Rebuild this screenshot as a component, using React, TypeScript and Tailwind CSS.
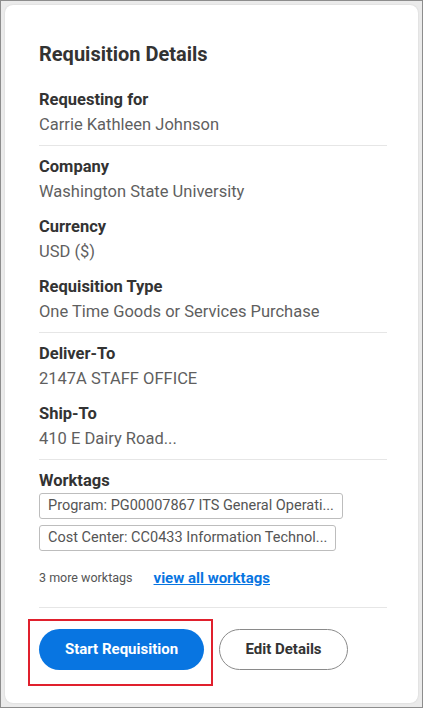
import React from "react";

type Field = { label: string; value: string };

const groups: Field[][] = [
  [{ label: "Requesting for", value: "Carrie Kathleen Johnson" }],
  [
    { label: "Company", value: "Washington State University" },
    { label: "Currency", value: "USD ($)" },
    { label: "Requisition Type", value: "One Time Goods or Services Purchase" },
  ],
  [
    { label: "Deliver-To", value: "2147A STAFF OFFICE" },
    { label: "Ship-To", value: "410 E Dairy Road..." },
  ],
];

const worktags = [
  "Program: PG00007867 ITS General Operati...",
  "Cost Center: CC0433 Information Technol...",
];

function Divider() {
  return <div className="my-[8px] h-px w-full bg-[#e6e6e6]" />;
}

export default function App() {
  return (
    <div
      className="h-[708px] w-[423px] border border-[#8d8d8d] bg-[#ebebeb] p-[4px]"
      style={{ fontFamily: "Roboto, 'Liberation Sans', sans-serif" }}
    >
      <div className="flex h-full flex-col rounded-[8px] bg-white pl-[34px] pr-[31px] pt-[37px] shadow-[0_0_2px_rgba(0,0,0,0.12)]">
        <h1 className="text-[20px] font-bold leading-[24px] text-[#333333]">
          Requisition Details
        </h1>

        <div className="mt-[21px]">
          {groups.map((group, gi) => (
            <div key={gi}>
              {gi > 0 && <Divider />}
              <div className="flex flex-col gap-[10px]">
                {group.map((f) => (
                  <div key={f.label}>
                    <div className="text-[16.5px] font-bold leading-[25px] text-[#333333]">
                      {f.label}
                    </div>
                    <div className="text-[16.5px] leading-[25px] text-[#5f5f5f]">
                      {f.value}
                    </div>
                  </div>
                ))}
              </div>
            </div>
          ))}
          <Divider />
          <div>
            <div className="text-[16.5px] font-bold leading-[25px] text-[#333333]">
              Worktags
            </div>
            <div className="flex flex-col items-start gap-[6px]">
              {worktags.map((t) => (
                <span
                  key={t}
                  className="h-[26px] rounded-[3px] border border-[#bdbdbd] pl-[8px] pr-[8px] text-[14.5px] leading-[24px] text-[#555555]"
                >
                  {t}
                </span>
              ))}
            </div>
            <div className="mt-[17px] flex items-center text-[#555555]">
              <span className="text-[12.5px] leading-[20px]">3 more worktags</span>
              <a
                href="#"
                className="ml-[21px] text-[15px] font-bold leading-[20px] text-[#0875e1] underline"
              >
                view all worktags
              </a>
            </div>
          </div>
          <div className="mt-[19px] h-px w-full bg-[#e6e6e6]" />
        </div>

        <div className="relative mt-[21px] flex items-center gap-[15px]">
          <div className="pointer-events-none absolute left-[-11px] top-[-10px] h-[67px] w-[185px] border-2 border-[#e0202d]" />
          <button className="h-[41px] w-[165px] rounded-full bg-[#0875e1] text-[15px] font-bold text-white">
            Start Requisition
          </button>
          <button className="h-[41px] w-[129px] rounded-full border border-[#8a8a8a] bg-white text-[15px] font-bold text-[#333333]">
            Edit Details
          </button>
        </div>
      </div>
    </div>
  );
}
